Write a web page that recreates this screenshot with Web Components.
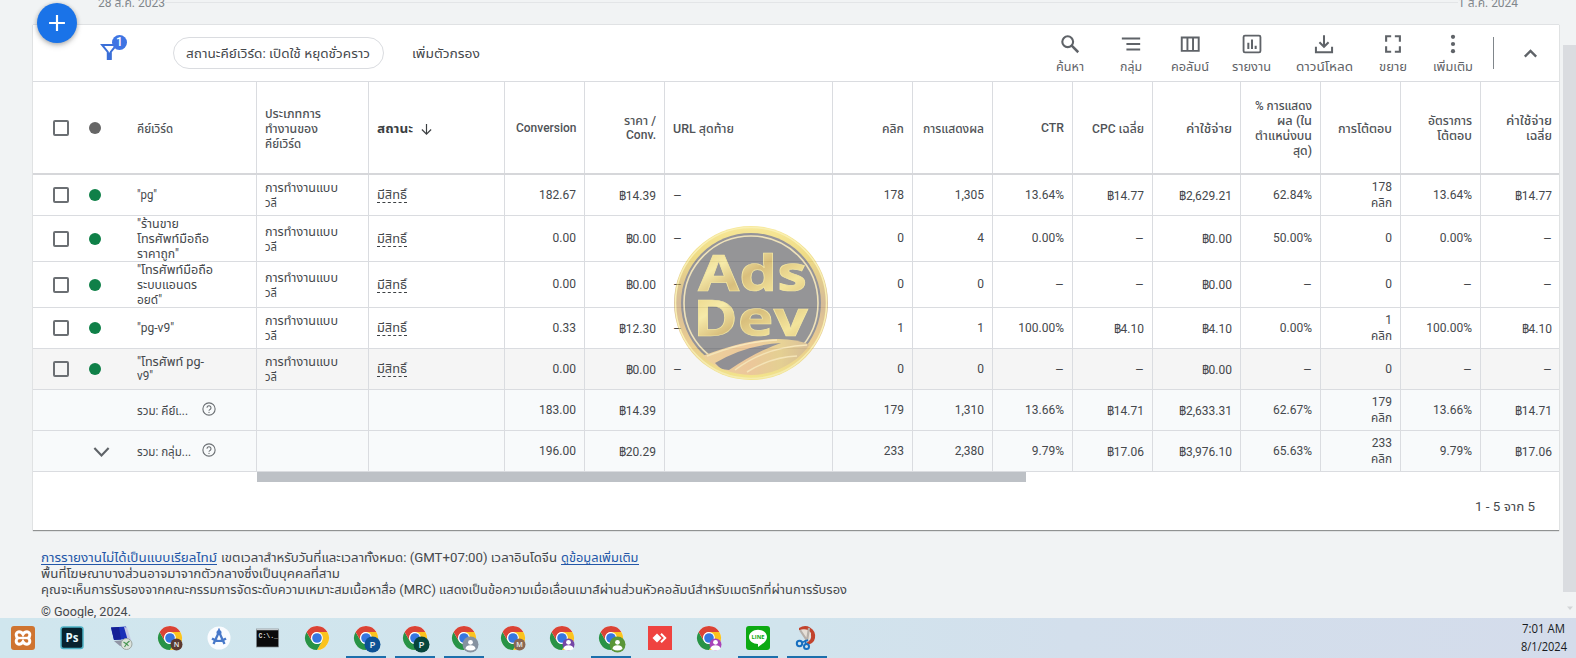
<!DOCTYPE html>
<html lang="th">
<head>
<meta charset="utf-8">
<title>Keywords</title>
<style>
html,body{margin:0;height:658px;overflow:hidden;background:#f1f3f4}
body{font:12px/15px Roboto,"Noto Sans Thai","Noto Sans",sans-serif;color:#45484c}
</style>
</head>
<body>
<ads-app></ads-app>
<script>
const make = (name, css, html, after) => customElements.define(name, class extends HTMLElement {
  connectedCallback() {
    if (!this.shadowRoot) {
      const root = this.attachShadow({ mode: 'open' });
      const t = document.createElement('template');
      t.innerHTML = `<style>*{box-sizing:border-box}${css}</style>` + (typeof html === 'function' ? html(this) : html);
      root.append(t.content.cloneNode(true));
      if (after) after(this, root);
    }
  }
});

/* A single line of text set to a given measure. Thai script sits slightly lower on the line. */
make('fit-text',
  `:host{display:inline-block;white-space:nowrap;height:15px;line-height:15px;vertical-align:top;flex:none}
   span{display:inline-block;white-space:pre;transform-origin:0 50%;line-height:inherit;vertical-align:top}`,
  '<span><slot></slot></span>',
  (el, root) => {
    const w = +el.getAttribute('w'), s = root.querySelector('span');
    if (!w) return;
    const n = s.getBoundingClientRect().width;
    el.style.width = w + 'px';
    const drop = /[\u0E01-\u0E3A\u0E40-\u0E5B–]/.test(el.textContent) ? 1 : 0;
    if (n) s.style.transform = `translateY(${drop}px) scaleX(${w / n})`;
  });

const ICONS = {
  search: '<circle cx="9.5" cy="9.5" r="5.9" fill="none" stroke="currentColor" stroke-width="2.3"/><path d="M13.6 13.6L21 21" stroke="currentColor" stroke-width="2.7"/>',
  lines: '<path d="M2 6h20M7 12h15M7 18h15" stroke="currentColor" stroke-width="2.1" fill="none"/>',
  columns: '<path d="M3 5h18.500v14.500H3zM9.200 5v14M15.300 5v14" stroke="currentColor" stroke-width="2.1" fill="none"/>',
  report: '<rect x="2.800" y="2.800" width="18.400" height="18.400" rx="1.5" fill="none" stroke="currentColor" stroke-width="2"/><path d="M8 17.500v-7M12 17.500V7M16 17.500v-3.500" stroke="currentColor" stroke-width="2.200"/>',
  download: '<path d="M12 2.500v12M7 10l5 5 5-5M3.200 15v6h17.600v-6" fill="none" stroke="currentColor" stroke-width="2.200"/>',
  expand: '<path d="M4.500 9.500v-6h5.500M14 3.500h5.500v6M19.500 14.500v6H14M10 20.500H4.500v-6" fill="none" stroke="currentColor" stroke-width="2.300"/>',
  more: '<g fill="currentColor"><circle cx="12" cy="4.200" r="2.300"/><circle cx="12" cy="12" r="2.300"/><circle cx="12" cy="19.800" r="2.300"/></g>',
  up: '<path d="M5.500 15.500L12 9l6.500 6.500" fill="none" stroke="currentColor" stroke-width="2.7"/>',
  down: '<path d="M3 7.500L12 17l9-9.500" fill="none" stroke="currentColor" stroke-width="2.700"/>',
  arrow: '<path d="M12 2v18M3.500 12L12 20.500 20.500 12" fill="none" stroke="currentColor" stroke-width="2.2"/>',
  help: '<circle cx="12" cy="12" r="10.500" fill="none" stroke="currentColor" stroke-width="1.900"/><path d="M8.600 9.800a3.400 3.400 0 1 1 5.200 2.900c-1.200.800-1.800 1.300-1.800 2.500" fill="none" stroke="currentColor" stroke-width="1.900"/><circle cx="12" cy="17.700" r="1.200" fill="currentColor"/>',
  filter: '<path d="M3.500 4.500h16.500l-6.500 8v8h-3.500v-8z" fill="none" stroke="currentColor" stroke-width="2.200"/><path d="M10 13h4v8h-4z" fill="currentColor"/>',
  plus: '<path d="M12 2.500v19M2.500 12h19" stroke="currentColor" stroke-width="2.600"/>'
};
make('ui-icon', ':host{display:block;flex:none;width:var(--s,22px);height:var(--s,22px)}svg{display:block;width:100%;height:100%}',
  el => `<svg viewBox="0 0 24 24">${ICONS[el.getAttribute('name')]}</svg>`);

make('fab-button',
  `:host{position:absolute;left:37px;top:3px;width:40px;height:40px;border-radius:50%;background:#1a73e8;color:#fff;display:flex;align-items:center;justify-content:center;box-shadow:0 1px 4px #0004,0 3px 6px #0002;z-index:3}`,
  '<ui-icon name="plus" style="--s:20px"></ui-icon>');

make('date-axis',
  `:host{display:flex;justify-content:space-between;height:24px;padding:0 58px 0 98px;color:#80868b;background:linear-gradient(#e3e5e7,#e3e5e7) 98px 2px/1420px 1px no-repeat}
   fit-text{margin-top:-5px;background:#f1f3f4}`,
  '<fit-text w="67">28 ส.ค. 2023</fit-text><fit-text w="60">1 ส.ค. 2024</fit-text>');

make('tool-button',
  `:host{position:relative;display:flex;flex-direction:column;align-items:center;width:var(--w);color:#5f6368;gap:4px;padding-top:8px}
   fit-text{font-size:12px}`,
  el => `<ui-icon name="${el.getAttribute('icon')}"></ui-icon><fit-text w="${el.getAttribute('w')}">${el.getAttribute('label')}</fit-text>`);

make('table-toolbar',
  `:host{display:flex;height:57px;border-bottom:1px solid #dadce0;align-items:stretch}
   .filter{position:relative;width:140px;padding:16px 0 0 66px;color:#3b6fd8}
   .badge{position:absolute;left:79px;top:10px;width:15px;height:15px;border-radius:50%;background:#3f74e3;color:#fff;font:500 12px/15px Roboto;text-align:center}
   .chip{height:32px;margin-top:12px;width:211px;border:1px solid #dadce0;border-radius:16px;padding:7px 12px 0;font-size:13px}
   .add{margin:20px 0 0 28px;font-size:13px}
   .tools{display:flex;margin-left:auto}
   .bar{width:1px;height:32px;background:#80868b;margin:12px 0 0 10px}
   .up{margin:18px 18px 0 26px;color:#5f6368}`,
  `<div class="filter"><ui-icon name="filter" style="--s:21px"></ui-icon><span class="badge">1</span></div>
   <div class="chip"><fit-text w="184">สถานะคีย์เวิร์ด: เปิดใช้ หยุดชั่วคราว</fit-text></div>
   <div class="add"><fit-text w="68">เพิ่มตัวกรอง</fit-text></div>
   <div class="tools">
   <tool-button style="--w:62px" icon="search" label="ค้นหา" w="28"></tool-button>
   <tool-button style="--w:60px" icon="lines" label="กลุ่ม" w="22"></tool-button>
   <tool-button style="--w:57px" icon="columns" label="คอลัมน์" w="38"></tool-button>
   <tool-button style="--w:67px" icon="report" label="รายงาน" w="39"></tool-button>
   <tool-button style="--w:78px" icon="download" label="ดาวน์โหลด" w="57"></tool-button>
   <tool-button style="--w:59px" icon="expand" label="ขยาย" w="28"></tool-button>
   <tool-button style="--w:61px" icon="more" label="เพิ่มเติม" w="40"></tool-button></div>
   <div class="bar"></div><ui-icon class="up" name="up" style="--s:21px"></ui-icon>`);

make('check-box', ':host{display:block;width:16px;height:16px;border:2px solid #6b6f73;border-radius:2px;flex:none}', '');

const F = (t, w) => w ? `<fit-text w="${w}">${t}</fit-text>` : `<span>${t}</span>`;
make('data-cell',
  `:host{display:flex;flex-direction:column;justify-content:center;align-items:flex-end;border-left:1px solid #dadce0;padding:0 8px 0 8px;min-width:0;white-space:nowrap}
   :host([left]){align-items:flex-start}`,
  '<slot></slot>');
const cell = (v, left) => {
  const lines = Array.isArray(v) ? v : [v];
  return `<data-cell ${left ? 'left' : ''}>${lines.map(l => {
    if (l === '') return '';
    const [t, w] = l.split('|');
    return t[0] === '฿' ? `<span class="money"><b>฿</b>${t.slice(1)}</span>` : F(t, w);
  }).join('')}</data-cell>`;
};

const ROWCSS = `:host{display:grid;grid-template-columns:223px 112px 136px 80px 80px 168px 80px 80px 80px 80px 88px 80px 80px 80px 80px;border-bottom:1px solid #dadce0;height:var(--h,41px);background:var(--bg,#fff)}
 .key{display:flex;align-items:center;padding-left:20px}
 .dot{width:12px;height:12px;border-radius:50%;background:var(--dot,#0f8048);margin:0 36px 0 20px;flex:none}
 .kw{display:flex;flex-direction:column;align-items:flex-start}
 .money{position:relative;top:1px;height:15px;line-height:15px}
 .money b{font:12px/1 "Liberation Sans","Noto Sans",sans-serif}
 .st{border-bottom:1px dashed #3c4043;height:16px}`;

make('head-row', ROWCSS + ':host{font-weight:500;border-bottom-width:2px;border-color:#d6d7da;color:#505357;padding-top:1px}data-cell{margin-top:-1px;padding-top:1px}.sort{display:flex;gap:7px;align-items:center;font-weight:700;color:#3c3f42}.sort ui-icon{margin-top:2px}',
  `<div class="key"><check-box></check-box><i class="dot" style="--dot:#666"></i>${F('คีย์เวิร์ด', 36)}</div>
   ${cell(['ประเภทการ|56', 'ทำงานของ|53', 'คีย์เวิร์ด|36'], 1)}
   <data-cell left><div class="sort">${F('สถานะ', 36)}<ui-icon name="arrow" style="--s:13px"></ui-icon></div></data-cell>
   ${cell('Conversion|60.5')}${cell(['ราคา /|32', 'Conv.|30'])}${cell('URL สุดท้าย|61', 1)}
   ${['คลิก|22', 'การแสดงผล|61', 'CTR|23', 'CPC เฉลี่ย|52', 'ค่าใช้จ่าย|46', ['% การแสดง|57', 'ผล (ใน|35', 'ตำแหน่งบน|57', 'สุด)|19'], 'การโต้ตอบ|54', ['อัตราการ|44', 'โต้ตอบ|35'], ['ค่าใช้จ่าย|46', 'เฉลี่ย|26']].map(v => cell(v)).join('')}`);

const DATA = [
  { kw: ['"pg"|20'], v: ['182.67', '฿14.39', '178', '1,305', '13.64%', '฿14.77', '฿2,629.21', '62.84%', ['178', 'คลิก|21'], '13.64%', '฿14.77'] },
  { kw: ['"ร้านขาย|42', 'โทรศัพท์มือถือ|72', 'ราคาถูก"|42'], v: ['0.00', '฿0.00', '0', '4', '0.00%', '–', '฿0.00', '50.00%', '0', '0.00%', '–'] },
  { kw: ['"โทรศัพท์มือถือ|76', 'ระบบแอนดร|60', 'อยด์"|25'], v: ['0.00', '฿0.00', '0', '0', '–', '–', '฿0.00', '–', '0', '–', '–'] },
  { kw: ['"pg-v9"|37'], v: ['0.33', '฿12.30', '1', '1', '100.00%', '฿4.10', '฿4.10', '0.00%', ['1', 'คลิก|21'], '100.00%', '฿4.10'] },
  { kw: ['"โทรศัพท์ pg-|67', 'v9"|16'], v: ['0.00', '฿0.00', '0', '0', '–', '–', '฿0.00', '–', '0', '–', '–'] }
];
const dash = v => v === '–' ? '–|9' : v;
const values = (v, url) => cell(v[0]) + cell(v[1]) + cell(url, 1) + v.slice(2).map(x => cell(dash(x))).join('');
make('keyword-row', ROWCSS, el => {
  const d = DATA[+el.getAttribute('row')];
  return `<div class="key"><check-box></check-box><i class="dot"></i><div class="kw">${d.kw.map(k => F(...k.split('|'))).join('')}</div></div>
    ${cell(['การทำงานแบบ|73', 'วลี|12'], 1)}<data-cell left><div class="st">${F('มีสิทธิ์', 30)}</div></data-cell>${values(d.v, '–|9')}`;
});
const SUMS = [
  { t: ['รวม: คีย์เ...', 51], v: ['183.00', '฿14.39', '179', '1,310', '13.66%', '฿14.71', '฿2,633.31', '62.67%', ['179', 'คลิก|21'], '13.66%', '฿14.71'] },
  { t: ['รวม: กลุ่ม...', 54], v: ['196.00', '฿20.29', '233', '2,380', '9.79%', '฿17.06', '฿3,976.10', '65.63%', ['233', 'คลิก|21'], '9.79%', '฿17.06'] }
];
make('total-row', ROWCSS + ':host{--bg:#f8fafb}.key{padding-left:0}.chev{width:104px;padding-left:59px;color:#5f6368}.lbl{width:65px}.help{color:#6b6f73;margin-top:-2px}.lbl{padding-top:1px}', el => {
  const i = +el.getAttribute('row'), d = SUMS[i];
  return `<div class="key"><div class="chev">${i ? '<ui-icon name="down" style="--s:19px"></ui-icon>' : ''}</div><div class="lbl">${F(...d.t)}</div><ui-icon class="help" name="help" style="--s:14px"></ui-icon></div>${cell('')}${cell('')}${values(d.v, '')}`;
});

make('gold-seal',
  ':host{position:absolute;left:673px;top:225px;width:156px;height:156px;opacity:.58;z-index:2}svg{display:block}',
  `<svg width="156" height="156" viewBox="0 0 156 156">
   <defs><linearGradient id="g" x1="0" y1="0" x2="0" y2="1"><stop offset="0" stop-color="#f2d84e"/><stop offset=".2" stop-color="#e4c22f"/><stop offset=".5" stop-color="#b98c4e"/><stop offset=".75" stop-color="#dda943"/><stop offset="1" stop-color="#f3dc40"/></linearGradient>
   <linearGradient id="s" x1="0" y1="0" x2="1" y2="0"><stop offset="0" stop-color="#e8bb5e"/><stop offset=".45" stop-color="#e6a75a"/><stop offset=".7" stop-color="#d9b54c"/><stop offset="1" stop-color="#b98a52"/></linearGradient>
   <linearGradient id="t" x1="0" y1="0" x2="1" y2="1"><stop offset="0" stop-color="#d4a818"/><stop offset=".3" stop-color="#f0dc6c"/><stop offset=".5" stop-color="#bd9120"/><stop offset=".75" stop-color="#ecd254"/><stop offset="1" stop-color="#b98616"/></linearGradient>
   <clipPath id="c"><circle cx="78" cy="78" r="72"/></clipPath></defs>
   <circle cx="78" cy="78" r="77" fill="url(#g)"/><circle cx="78" cy="78" r="75.500" fill="none" stroke="#f5e57c" stroke-width="1.500"/><circle cx="78" cy="78" r="70" fill="#4a4850"/>
   <circle cx="78" cy="78" r="67" fill="#4a4a4e" stroke="#e5cf8a" stroke-width="1.600"/>
   <g clip-path="url(#c)"><path d="M22 134Q66 116 100 114Q122 113 138 120L144 148 70 158z" fill="url(#s)"/><path d="M42 138Q72 120 108 118Q84 126 56 145L48 144z" fill="#4a4850"/><path d="M34 131Q72 116 104 115M62 145Q92 122 134 120M74 147Q98 132 124 131" fill="none" stroke="#f4d88c" stroke-width="1.500"/></g>
   <g font-family="Open Sans,Noto Sans,sans-serif" font-weight="700" fill="url(#t)" stroke="#eed75e" stroke-width=".7"><text x="25" y="66" font-size="50" textLength="109" lengthAdjust="spacingAndGlyphs">Ads</text><text x="20" y="111" font-size="51" textLength="115" lengthAdjust="spacingAndGlyphs">Dev</text></g></svg>`);

make('keyword-panel',
  `:host{display:block;position:relative;margin-left:33px;width:1526px;height:506px;background:#fff;border-top:1px solid #e0e2e4;box-shadow:0 1px 1px #0006}
   .scroll{width:769px;height:10px;margin-left:224px;background:#bdc1c6}
   .pager{display:flex;justify-content:flex-end;padding:17px 24px 0 0}`,
  `<table-toolbar></table-toolbar><head-row style="--h:93px"></head-row>
   <keyword-row row="0"></keyword-row><keyword-row row="1" style="--h:46px"></keyword-row><keyword-row row="2" style="--h:46px"></keyword-row><keyword-row row="3"></keyword-row><keyword-row row="4" style="--bg:#f5f5f5"></keyword-row>
   <total-row row="0"></total-row><total-row row="1"></total-row>
   <div class="scroll"></div><div class="pager"><fit-text w="60">1 - 5 จาก 5</fit-text></div>`);

make('page-notes',
  `:host{display:flex;flex-direction:column;margin:20px 0 0 41px;height:68px;font-size:12px}
   div{display:flex;height:16px;flex:none}fit-text{margin-right:4px}a{color:#2457a8;display:block;height:15px;margin-right:4px;border-bottom:1px solid #2457a8}a fit-text{margin:0}.c{margin-top:7px}`,
  `<div><a>${F('การรายงานไม่ได้เป็นแบบเรียลไทม์', 176)}</a>${F('เขตเวลาสำหรับวันที่และเวลาทั้งหมด: (GMT+07:00) เวลาอินโดจีน', 336)}<a>${F('ดูข้อมูลเพิ่มเติม', 77.5)}</a></div>
   <div>${F('พื้นที่โฆษณาบางส่วนอาจมาจากตัวกลางซึ่งเป็นบุคคลที่สาม', 299)}</div>
   <div>${F('คุณจะเห็นการรับรองจากคณะกรรมการจัดระดับความเหมาะสมเนื้อหาสื่อ (MRC) แสดงเป็นข้อความเมื่อเลื่อนเมาส์ผ่านส่วนหัวคอลัมน์สำหรับเมตริกที่ผ่านการรับรอง', 806)}</div>
   <div class="c">${F('© Google, 2024.', 90)}</div>`);

make('page-scrollbar',
  `:host{position:absolute;right:0;top:0;width:13px;height:618px;background:#f1f3f4}
   i{display:block;margin-top:45px;height:547px;background:#dadce0}
   svg{display:block;margin:12px 0 0 3px}`,
  '<i></i><svg width="8" height="8"><path d="M1 2.500h6L4 6z" fill="#d3d5d7"/></svg>');

const CHROME = `<circle cx="12" cy="12" r="12" fill="#fff"/><path d="M12 6H22.400A12 12 0 0 1 12 24L17.200 15z" fill="#fbc31e"/><path d="M1.600 6A12 12 0 0 0 12 24L17.200 15A6 6 0 0 1 6.800 15z" fill="#289346"/><path d="M1.600 6A12 12 0 0 1 22.400 6H12A6 6 0 0 0 6.800 15z" fill="#da4335"/><circle cx="12" cy="12" r="5.900" fill="#fff"/><circle cx="12" cy="12" r="4.800" fill="#3676e0"/>`;
const letter = (c, l, r = 8) => `<circle cx="18.500" cy="18.500" r="${r}" fill="${c}"/><text x="18.500" y="${18.5 + r * .42}" font-family="Open Sans" font-weight="600" font-size="${r * 1.2}" fill="#e9eef0" text-anchor="middle">${l}</text>`;
const person = (c, r = 7) => `<circle cx="18.500" cy="18.500" r="${r}" fill="${c}"/><circle cx="18.500" cy="16.300" r="2.400" fill="#fff"/><path d="M13.500 23q0-3.800 5-3.800t5 3.800q-5 3-10 0z" fill="#fff"/>`;
const APPS = {
  xampp: '<rect width="24" height="24" rx="3" fill="#cf7430"/><path d="M8 5.800Q10.500 5.800 12 8.300 13.500 5.800 16 5.800A3 3 0 0 1 18.800 9Q18.800 11 17 12 18.800 13 18.800 15A3 3 0 0 1 16 18.200Q13.500 18.200 12 15.700 10.500 18.200 8 18.200A3 3 0 0 1 5.200 15Q5.200 13 7 12 5.200 11 5.200 9A3 3 0 0 1 8 5.800z" fill="none" stroke="#fff" stroke-width="3"/><path d="M8 12h8" stroke="#fff" stroke-width="2.400"/>',
  ps: '<rect x="1" y="1" width="22" height="21.500" rx="2.500" fill="#07222e" stroke="#4eb2c5" stroke-width="1.500"/><text x="12" y="15.800" font-family="Open Sans" font-weight="700" font-size="11.500" fill="#e6f8fc" text-anchor="middle">Ps</text>',
  remote: '<path d="M2 1.500L17 0.500 20 13 5 14z" fill="#1b2fb8"/><path d="M2 1.500L10 1 12 13.500 5 14z" fill="#152095"/><path d="M15 1l3 .5L22 14l-3 1z" fill="#c5c9e4"/><path d="M5 15l12-1 1 5-7 1z" fill="#9094a5"/><circle cx="17.500" cy="18" r="5.500" fill="#dce3dc" stroke="#9da7a2"/><path d="M14.500 16l3 2-2 3M20.500 15l-3 2.500 2 2.500" fill="none" stroke="#4a9654" stroke-width="1.200"/>',
  chromeN: CHROME + letter('#5b3931', 'N', 6),
  studio: '<circle cx="12" cy="12" r="11.500" fill="#fafcff"/><path d="M11.500 7L6.500 18M12.500 7l5 11" stroke="#4778c9" stroke-width="2.300"/><path d="M5 12.500q7 5 14 0" fill="none" stroke="#4778c9" stroke-width="2.200"/><circle cx="12" cy="6.500" r="2.500" fill="#4778c9"/><path d="M12 2.500v3" stroke="#4778c9" stroke-width="1.700"/>',
  cmd: '<rect x=".5" y="3" width="22" height="18" fill="#0b0b0c" stroke="#7c878c" stroke-width=".7"/><path d="M.500 3.500h22" stroke="#c4cbcf" stroke-width="1.500"/><text x="2.500" y="11.500" font-family="Liberation Mono" font-weight="700" font-size="6.500" fill="#dedede">C:\\._</text>',
  chrome: CHROME,
  chromeP1: CHROME + letter('#0d5295', 'P'), chromeP2: CHROME + letter('#07453c', 'P'),
  chromeG: CHROME + person('#8692a0', 8), chromeM: CHROME + letter('#8a6753', 'M', 6),
  chromeV: CHROME + person('#7546a7', 6), chromeGr: CHROME + person('#5a9638', 8),
  anydesk: '<rect width="24" height="24" fill="#ef4340"/><path d="M4.500 12l4.500-4.500 4.500 4.500L9 16.500z" fill="#fff"/><path d="M13 7.800l4.200 4.200-4.200 4.200" fill="none" stroke="#fff" stroke-width="2"/>',
  chromeMg: CHROME + person('#a943b8', 6),
  line: '<rect width="24" height="24" rx="3" fill="#0caa12"/><path d="M12 3.800c5 0 9 3.200 9 7.200 0 4.500-5 7-9 10v-3c-5 0-9-3.200-9-7s4-7.200 9-7.200z" fill="#fff"/><text x="12" y="13.200" font-family="Open Sans" font-weight="700" font-size="5.800" textLength="13" lengthAdjust="spacingAndGlyphs" fill="#0caa12" text-anchor="middle">LINE</text>',
  snip: '<path d="M4 2Q10-1.500 15 1.500 21 5 20 12 19 18 11 19L12 16Q17 14 16 9 15 4 4 4z" fill="#c2432d"/><path d="M6 3.500Q13 2 16 7 16.500 12 12 15z" fill="#e6dfd7"/><path d="M14 2L12 15M5 4l8 12" stroke="#b7b0aa" stroke-width="2.200"/><circle cx="4.500" cy="17.500" r="2.700" fill="none" stroke="#176fc0" stroke-width="2"/><circle cx="11.500" cy="20.500" r="2.500" fill="none" stroke="#176fc0" stroke-width="2"/><path d="M7 16.500l6-2.500M11 18l-1-4" stroke="#176fc0" stroke-width="1.600"/>'
};
make('task-icon',
  `:host{display:flex;flex:none;justify-content:center;width:49px;height:40px;padding-top:8px}
   :host([on]){background:linear-gradient(#1c6fac,#1c6fac) center bottom/40px 2px no-repeat}
   svg{display:block;overflow:visible}`,
  el => `<svg width="24" height="24" viewBox="0 0 24 24">${APPS[el.getAttribute('app')]}</svg>`);

make('task-bar',
  `:host{position:relative;display:flex;height:40px;background:linear-gradient(90deg,#d0e6ee,#d1e4ed 50%,#d3dfec 68%,#d4dceb)}
   .clock{margin-left:auto;padding:3px 9px 0 0;display:flex;flex-direction:column;align-items:flex-end;gap:3px;color:#171a20;font:12px/15px "Open Sans","Noto Sans",sans-serif}
   .clock fit-text:first-child{margin-right:2px}.a{display:flex;margin-left:-1.500px}`,
  `<div class="a">${['xampp', 'ps', 'remote', 'chromeN', 'studio', 'cmd', 'chrome', 'chromeP1+', 'chromeP2+', 'chromeG+', 'chromeM', 'chromeV', 'chromeGr+', 'anydesk', 'chromeMg', 'line+', 'snip+'].map(a => `<task-icon app="${a.replace('+', '')}" ${a.endsWith('+') ? 'on' : ''}></task-icon>`).join('')}</div>
   <div class="clock">${F('7:01 AM', 43)}${F('8/1/2024', 46)}</div>`);

make('ads-app',
  ':host{display:flex;flex-direction:column;position:relative;width:1576px;height:658px;overflow:hidden;background:#f1f3f4}date-axis,keyword-panel,page-notes,task-bar{flex:none}',
  '<date-axis></date-axis><keyword-panel></keyword-panel><page-notes></page-notes><task-bar></task-bar><fab-button></fab-button><gold-seal></gold-seal><page-scrollbar></page-scrollbar>');
</script>
</body>
</html>
